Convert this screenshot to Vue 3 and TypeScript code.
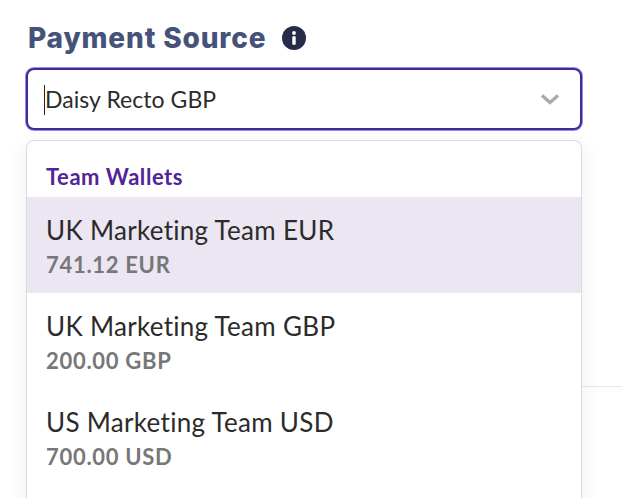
<script setup lang="ts">
const items = [
  { name: 'UK Marketing Team EUR', amount: '741.12 EUR', active: true },
  { name: 'UK Marketing Team GBP', amount: '200.00 GBP', active: false },
  { name: 'US Marketing Team USD', amount: '700.00 USD', active: false },
]
</script>

<template>
  <div class="page">
    <div class="divider"></div>
    <div class="head">
      <h1 class="title">Payment Source</h1>
      <svg class="info" width="24" height="24" viewBox="0 0 24 24">
        <circle cx="12" cy="12" r="12" fill="#252b48" />
        <circle cx="12" cy="7" r="1.9" fill="#fff" />
        <rect x="10.3" y="10.3" width="3.4" height="8.4" rx="0.6" fill="#fff" />
      </svg>
    </div>
    <div class="select">
      <span class="caret"></span>
      <span class="value">Daisy Recto GBP</span>
      <svg class="chev" width="20" height="12" viewBox="0 0 20 12">
        <path d="M2 2.5 L10 9.5 L18 2.5" fill="none" stroke="#aaaaaa" stroke-width="3.4" />
      </svg>
    </div>
    <div class="menu">
      <div class="group">Team Wallets</div>
      <div v-for="item in items" :key="item.name" class="item" :class="{ active: item.active }">
        <div class="name">{{ item.name }}</div>
        <div class="amount">{{ item.amount }}</div>
      </div>
    </div>
  </div>
</template>

<style>
html, body { margin: 0; background: #fff; overflow: hidden; }
</style>

<style scoped>
.page {
  position: relative;
  width: 622px;
  height: 498px;
  overflow: hidden;
  padding: 20px 40px 0 26px;
  box-sizing: border-box;
  font-family: Lato, sans-serif;
  font-variant-ligatures: none;
}
.divider {
  position: absolute;
  left: 582px;
  right: 0;
  top: 386px;
  height: 1px;
  background: #e8e8f4;
}
.head {
  display: flex;
  align-items: center;
  gap: 16px;
  height: 36px;
  padding-left: 2px;
}
.title {
  margin: 0;
  font-family: Inter, sans-serif;
  font-size: 28px;
  line-height: 34px;
  font-weight: 800;
  letter-spacing: 0.85px;
  color: #45527a;
}
.select {
  position: relative;
  display: flex;
  align-items: center;
  justify-content: space-between;
  box-sizing: border-box;
  height: 62px;
  margin-top: 12px;
  padding: 0 20px 0 17px;
  background: #fff;
  border: 2px solid #4d2593;
  border-radius: 8px;
  box-shadow: 0 0 0 1px #7d9be8;
}
.caret {
  position: absolute;
  left: 16px;
  top: 15px;
  width: 1px;
  height: 30px;
  background: #222;
}
.value {
  font-size: 23px;
  letter-spacing: 0.05px;
  color: #2b2b2b;
}
.menu {
  position: relative;
  margin-top: 10px;
  height: 400px;
  background: #fff;
  border: 1px solid #dcdcdc;
  border-bottom: 0;
  border-radius: 8px;
  box-sizing: border-box;
  box-shadow: 0 4px 20px rgba(0, 0, 0, 0.08);
  overflow: hidden;
}
.group {
  height: 56px;
  padding: 21px 19px 0;
  box-sizing: border-box;
  font-size: 22px;
  line-height: 29px;
  font-weight: 700;
  letter-spacing: 0.55px;
  color: #52249a;
}
.item {
  height: 96px;
  padding: 17px 19px 0;
  box-sizing: border-box;
}
.item.active { background: #ebe6f2; }
.name {
  font-size: 26px;
  line-height: 33px;
  letter-spacing: 0.3px;
  color: #2b2b2b;
}
.amount {
  font-size: 22px;
  line-height: 28px;
  margin-top: 4px;
  font-weight: 700;
  letter-spacing: 0.7px;
  color: #777777;
}
</style>
